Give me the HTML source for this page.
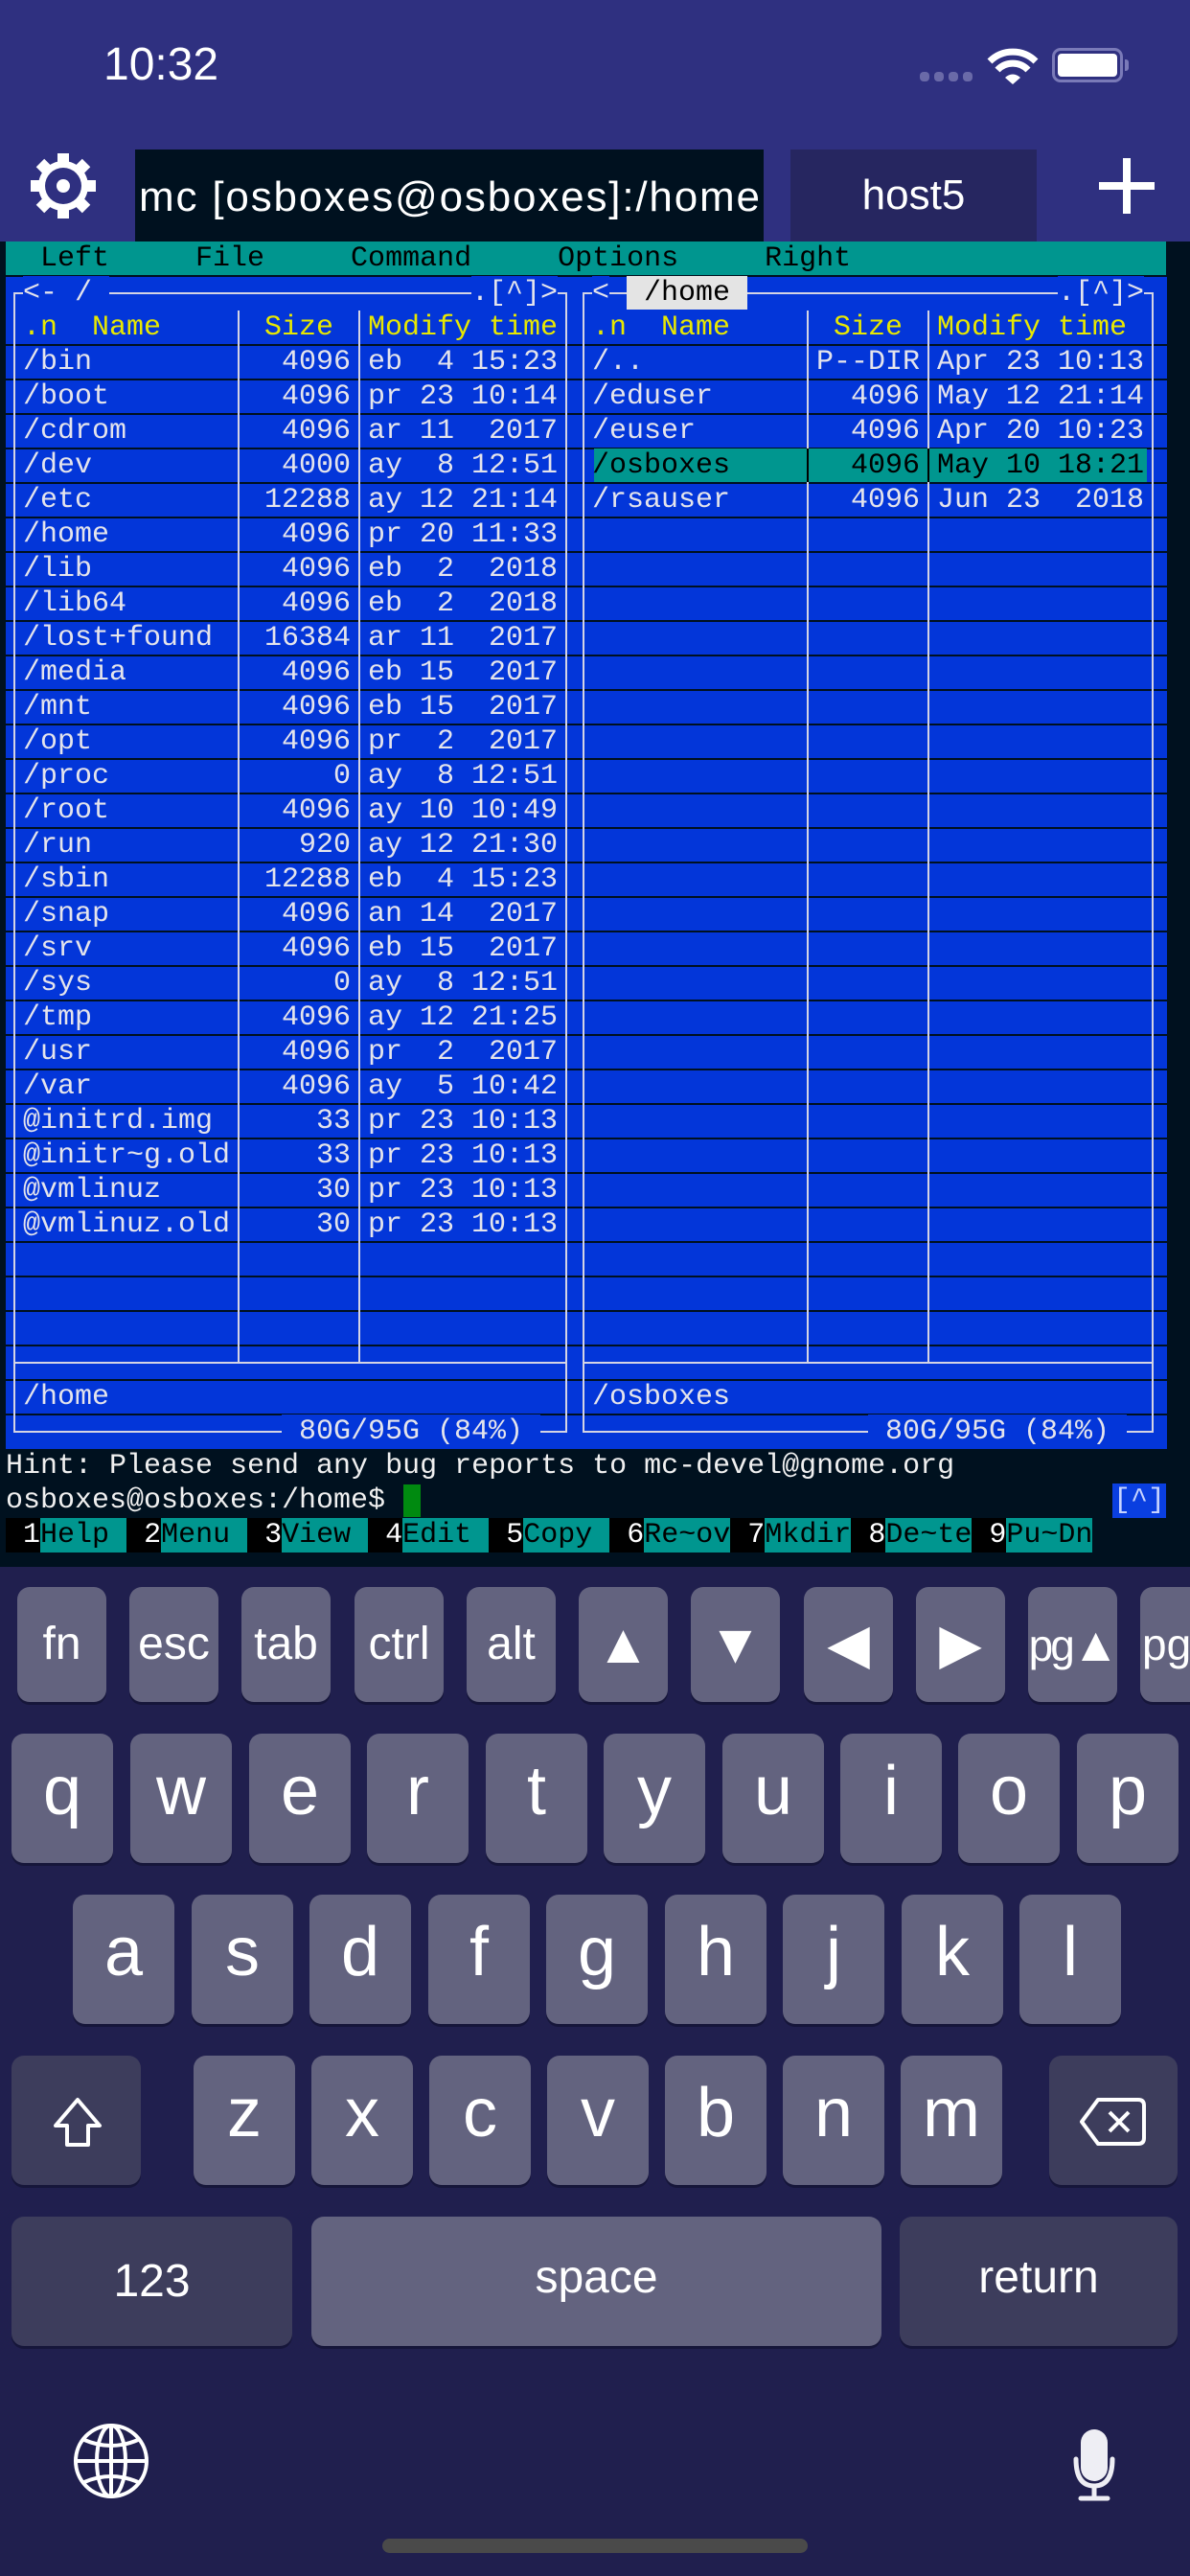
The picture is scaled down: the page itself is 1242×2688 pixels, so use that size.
<!DOCTYPE html>
<html><head><meta charset="utf-8">
<style>
*{margin:0;padding:0;box-sizing:border-box}
body{width:1242px;height:2688px;background:#201f4e;position:relative;overflow:hidden;font-family:"Liberation Sans",sans-serif}
.a{position:absolute}
.t{position:absolute;font-family:"Liberation Mono",monospace;font-size:30px;line-height:36px;white-space:pre;color:#e4e4ec}
.y{color:#e8e800}
.k{color:#000}
.s{text-align:right}
.vl{position:absolute;width:2px;background:#d4d4e4}
.hl{position:absolute;height:2px;background:#d4d4e4}
.bb{background:#0336d9}
.rl{position:absolute;left:6px;width:1212px;height:2px;background:#001120}
.key{position:absolute;background:#63637f;border-radius:13px;box-shadow:0 3px 0 #16163a;color:#fff;text-align:center}
.dk{background:#3d3d5c}
.acc{top:1656px;width:93px;height:120px;font-size:48px;line-height:120px}
.ar{font-size:58px}
.lt{font-size:72px;width:106px;height:135px;line-height:120px}
</style></head><body>
<div class="a" style="left:0;top:0;width:1242px;height:252px;background:#2f3080"></div>
<div class="a" style="left:108px;top:40px;font-size:48px;color:#fff;line-height:56px">10:32</div>
<div class="a" style="left:960px;top:75px;width:10px;height:10px;border-radius:4px;background:#6a6aa8"></div>
<div class="a" style="left:975px;top:75px;width:10px;height:10px;border-radius:4px;background:#6a6aa8"></div>
<div class="a" style="left:990px;top:75px;width:10px;height:10px;border-radius:4px;background:#6a6aa8"></div>
<div class="a" style="left:1005px;top:75px;width:10px;height:10px;border-radius:4px;background:#6a6aa8"></div>
<svg class="a" style="left:1030px;top:48px" width="54" height="40" viewBox="0 0 54 40">
<path d="M3 16 A34 34 0 0 1 51 16" stroke="#fff" stroke-width="7" fill="none"/>
<path d="M11 25 A22 22 0 0 1 43 25" stroke="#fff" stroke-width="7" fill="none"/>
<path d="M19 33 L27 40 L35 33 A11 11 0 0 0 19 33Z" fill="#fff"/></svg>
<div class="a" style="left:1098px;top:50px;width:74px;height:36px;border:3px solid #7a7ab8;border-radius:9px"></div>
<div class="a" style="left:1104px;top:56px;width:62px;height:24px;background:#fff;border-radius:4px"></div>
<div class="a" style="left:1174px;top:62px;width:4px;height:12px;background:#7a7ab8;border-radius:0 3px 3px 0"></div>
<svg class="a" style="left:30px;top:158px" width="72" height="72" viewBox="-36 -36 72 72">
<g fill="#fff"><rect x="-6" y="-34" width="12" height="14"/><rect x="-6" y="-34" width="12" height="14" transform="rotate(45)"/><rect x="-6" y="-34" width="12" height="14" transform="rotate(90)"/><rect x="-6" y="-34" width="12" height="14" transform="rotate(135)"/><rect x="-6" y="-34" width="12" height="14" transform="rotate(180)"/><rect x="-6" y="-34" width="12" height="14" transform="rotate(225)"/><rect x="-6" y="-34" width="12" height="14" transform="rotate(270)"/><rect x="-6" y="-34" width="12" height="14" transform="rotate(315)"/>
<circle r="26"/></g><circle r="19" fill="#2f3080"/><circle r="7" fill="#fff"/></svg>
<div class="a" style="left:141px;top:156px;width:656px;height:96px;background:#00111f"></div>
<svg class="a" style="left:141px;top:156px" width="656" height="96"><text x="4" y="64" font-family="Liberation Sans" font-size="44" fill="#fff" textLength="648">mc [osboxes@osboxes]:/home</text></svg>
<div class="a" style="left:825px;top:156px;width:257px;height:96px;background:#262660;color:#fff;font-size:44px;line-height:96px;text-align:center">host5</div>
<div class="a" style="left:1147px;top:190px;width:58px;height:8px;background:#fff"></div>
<div class="a" style="left:1172px;top:165px;width:8px;height:58px;background:#fff"></div>

<div class="a" style="left:0;top:252px;width:1242px;height:1383px;background:#00111f"></div>
<div class="a" style="left:6px;top:252px;width:1211px;height:36px;background:#00968f"></div>
<div class="a" style="left:6px;top:288px;width:1212px;height:1224px;background:#0336d9"></div>
<div class="t k" style="left:6px;top:252px">  Left     File     Command     Options     Right</div>
<div class="rl" style="top:287px"></div>
<div class="rl" style="top:359px"></div><div class="rl" style="top:395px"></div><div class="rl" style="top:431px"></div><div class="rl" style="top:467px"></div><div class="rl" style="top:503px"></div><div class="rl" style="top:539px"></div><div class="rl" style="top:575px"></div><div class="rl" style="top:611px"></div><div class="rl" style="top:647px"></div><div class="rl" style="top:683px"></div><div class="rl" style="top:719px"></div><div class="rl" style="top:755px"></div><div class="rl" style="top:791px"></div><div class="rl" style="top:827px"></div><div class="rl" style="top:863px"></div><div class="rl" style="top:899px"></div><div class="rl" style="top:935px"></div><div class="rl" style="top:971px"></div><div class="rl" style="top:1007px"></div><div class="rl" style="top:1043px"></div><div class="rl" style="top:1079px"></div><div class="rl" style="top:1115px"></div><div class="rl" style="top:1151px"></div><div class="rl" style="top:1187px"></div><div class="rl" style="top:1223px"></div><div class="rl" style="top:1259px"></div><div class="rl" style="top:1295px"></div><div class="rl" style="top:1331px"></div><div class="rl" style="top:1367px"></div><div class="rl" style="top:1403px"></div><div class="rl" style="top:1439px"></div><div class="rl" style="top:1475px"></div>

<div class="a" style="left:620px;top:468px;width:577px;height:35px;background:#00968f"></div>

<div class="vl" style="left:14px;top:306px;height:1189px"></div>
<div class="vl" style="left:590px;top:306px;height:1189px"></div>
<div class="vl" style="left:608px;top:306px;height:1189px"></div>
<div class="vl" style="left:1202px;top:306px;height:1189px"></div>
<div class="vl" style="left:248px;top:324px;height:1098px"></div>
<div class="vl" style="left:374px;top:324px;height:1098px"></div>
<div class="vl" style="left:842px;top:324px;height:1098px"></div>
<div class="vl" style="left:968px;top:324px;height:1098px"></div>
<div class="a" style="left:842px;top:468px;width:2px;height:35px;background:#000"></div>
<div class="a" style="left:968px;top:468px;width:2px;height:35px;background:#000"></div>
<div class="hl" style="left:14px;top:305px;width:578px"></div>
<div class="hl" style="left:608px;top:305px;width:596px"></div>
<div class="hl" style="left:14px;top:1421px;width:578px"></div>
<div class="hl" style="left:608px;top:1421px;width:596px"></div>
<div class="hl" style="left:14px;top:1493px;width:578px"></div>
<div class="hl" style="left:608px;top:1493px;width:596px"></div>

<div class="t bb" style="left:24px;top:288px">&lt;- / </div>
<div class="t bb" style="left:492px;top:288px">.[^]&gt;</div>
<div class="t bb" style="left:618px;top:288px">&lt;</div>
<div class="t k" style="left:654px;top:288px;background:#e4e4e4;height:35px"> /home </div>
<div class="t bb" style="left:1104px;top:288px">.[^]&gt;</div>
<div class="t bb" style="left:294px;top:1476px"> 80G/95G (84%) </div>
<div class="t bb" style="left:906px;top:1476px"> 80G/95G (84%) </div>

<div class="t y" style="left:24px;top:324px">.n  Name</div>
<div class="t y" style="left:276px;top:324px">Size</div>
<div class="t y" style="left:384px;top:324px">Modify time</div>
<div class="t y" style="left:618px;top:324px">.n  Name</div>
<div class="t y" style="left:870px;top:324px">Size</div>
<div class="t y" style="left:978px;top:324px">Modify time</div>

<div class="t" style="left:24px;top:360px">/bin
/boot
/cdrom
/dev
/etc
/home
/lib
/lib64
/lost+found
/media
/mnt
/opt
/proc
/root
/run
/sbin
/snap
/srv
/sys
/tmp
/usr
/var
@initrd.img
@initr~g.old
@vmlinuz
@vmlinuz.old</div>
<div class="t s" style="left:258px;width:108px;top:360px">4096
4096
4096
4000
12288
4096
4096
4096
16384
4096
4096
4096
0
4096
920
12288
4096
4096
0
4096
4096
4096
33
33
30
30</div>
<div class="t" style="left:384px;top:360px">eb  4 15:23
pr 23 10:14
ar 11  2017
ay  8 12:51
ay 12 21:14
pr 20 11:33
eb  2  2018
eb  2  2018
ar 11  2017
eb 15  2017
eb 15  2017
pr  2  2017
ay  8 12:51
ay 10 10:49
ay 12 21:30
eb  4 15:23
an 14  2017
eb 15  2017
ay  8 12:51
ay 12 21:25
pr  2  2017
ay  5 10:42
pr 23 10:13
pr 23 10:13
pr 23 10:13
pr 23 10:13</div>

<div class="t" style="left:618px;top:360px">/..
/eduser
/euser
<span class="k">/osboxes</span>
/rsauser</div>
<div class="t s" style="left:852px;width:108px;top:360px">P--DIR
4096
4096
<span class="k">4096</span>
4096</div>
<div class="t" style="left:978px;top:360px">Apr 23 10:13
May 12 21:14
Apr 20 10:23
<span class="k">May 10 18:21</span>
Jun 23  2018</div>

<div class="t" style="left:24px;top:1440px">/home</div>
<div class="t" style="left:618px;top:1440px">/osboxes</div>

<div class="t" style="left:6px;top:1512px;color:#f0f0f0">Hint: Please send any bug reports to mc-devel@gnome.org</div>
<div class="t" style="left:6px;top:1548px;color:#f0f0f0">osboxes@osboxes:/home$</div>
<div class="a" style="left:421px;top:1549px;width:18px;height:34px;background:#008a10"></div>
<div class="t" style="left:1161px;top:1548px;width:56px;height:36px;background:#0a3fe0;color:#c8d4ff;text-align:center">[^]</div>

<div class="a" style="left:6px;top:1584px;width:1134px;height:36px;background:#000"></div>
<div class="a" style="left:42px;top:1584px;width:90px;height:36px;background:#00968f"></div>
<div class="a" style="left:168px;top:1584px;width:90px;height:36px;background:#00968f"></div>
<div class="a" style="left:294px;top:1584px;width:90px;height:36px;background:#00968f"></div>
<div class="a" style="left:420px;top:1584px;width:90px;height:36px;background:#00968f"></div>
<div class="a" style="left:546px;top:1584px;width:90px;height:36px;background:#00968f"></div>
<div class="a" style="left:672px;top:1584px;width:90px;height:36px;background:#00968f"></div>
<div class="a" style="left:798px;top:1584px;width:90px;height:36px;background:#00968f"></div>
<div class="a" style="left:924px;top:1584px;width:90px;height:36px;background:#00968f"></div>
<div class="a" style="left:1050px;top:1584px;width:90px;height:36px;background:#00968f"></div>
<div class="t" style="left:6px;top:1584px;color:#fff"> <span>1</span><span class="k">Help </span> <span>2</span><span class="k">Menu </span> <span>3</span><span class="k">View </span> <span>4</span><span class="k">Edit </span> <span>5</span><span class="k">Copy </span> <span>6</span><span class="k">Re~ov</span> <span>7</span><span class="k">Mkdir</span> <span>8</span><span class="k">De~te</span> <span>9</span><span class="k">Pu~Dn</span></div>

<div class="key acc" style="left:18px">fn</div>
<div class="key acc" style="left:135px">esc</div>
<div class="key acc" style="left:252px">tab</div>
<div class="key acc" style="left:370px">ctrl</div>
<div class="key acc" style="left:487px">alt</div>
<div class="key acc ar" style="left:604px">▲</div>
<div class="key acc ar" style="left:721px">▼</div>
<div class="key acc ar" style="left:839px">◀</div>
<div class="key acc ar" style="left:956px">▶</div>
<div class="key acc" style="left:1073px;font-size:46px;letter-spacing:-3px">pg<span style="font-size:50px">▲</span></div>
<div class="key acc" style="left:1190px;text-align:left;padding-left:2px;font-size:46px">pg</div>

<div class="key lt" style="left:12px;top:1809px">q</div>
<div class="key lt" style="left:136px;top:1809px">w</div>
<div class="key lt" style="left:260px;top:1809px">e</div>
<div class="key lt" style="left:383px;top:1809px">r</div>
<div class="key lt" style="left:507px;top:1809px">t</div>
<div class="key lt" style="left:630px;top:1809px">y</div>
<div class="key lt" style="left:754px;top:1809px">u</div>
<div class="key lt" style="left:877px;top:1809px">i</div>
<div class="key lt" style="left:1000px;top:1809px">o</div>
<div class="key lt" style="left:1124px;top:1809px">p</div>
<div class="key lt" style="left:76px;top:1977px">a</div>
<div class="key lt" style="left:200px;top:1977px">s</div>
<div class="key lt" style="left:323px;top:1977px">d</div>
<div class="key lt" style="left:447px;top:1977px">f</div>
<div class="key lt" style="left:570px;top:1977px">g</div>
<div class="key lt" style="left:694px;top:1977px">h</div>
<div class="key lt" style="left:817px;top:1977px">j</div>
<div class="key lt" style="left:941px;top:1977px">k</div>
<div class="key lt" style="left:1064px;top:1977px">l</div>
<div class="key dk" style="left:12px;top:2145px;width:135px;height:135px"></div>
<svg class="a" style="left:52px;top:2188px" width="58" height="54" viewBox="0 0 58 54"><path d="M29 3 L52 30 L40 30 L40 50 L18 50 L18 30 L6 30 Z" fill="none" stroke="#fff" stroke-width="4" stroke-linejoin="round"/></svg>
<div class="key lt" style="left:202px;top:2145px">z</div>
<div class="key lt" style="left:325px;top:2145px">x</div>
<div class="key lt" style="left:448px;top:2145px">c</div>
<div class="key lt" style="left:571px;top:2145px">v</div>
<div class="key lt" style="left:694px;top:2145px">b</div>
<div class="key lt" style="left:817px;top:2145px">n</div>
<div class="key lt" style="left:940px;top:2145px">m</div>
<div class="key dk" style="left:1095px;top:2145px;width:134px;height:135px"></div>
<svg class="a" style="left:1126px;top:2188px" width="72" height="52" viewBox="0 0 72 52"><path d="M20 3 L62 3 Q68 3 68 9 L68 43 Q68 49 62 49 L20 49 L3 26 Z" fill="none" stroke="#fff" stroke-width="4" stroke-linejoin="round"/><path d="M32 16 L52 36 M52 16 L32 36" stroke="#fff" stroke-width="4"/></svg>
<div class="key dk" style="left:12px;top:2313px;width:293px;height:135px;font-size:48px;line-height:135px">123</div>
<div class="key" style="left:325px;top:2313px;width:595px;height:135px;font-size:48px;line-height:128px">space</div>
<div class="key dk" style="left:939px;top:2313px;width:290px;height:135px;font-size:48px;line-height:128px">return</div>

<svg class="a" style="left:76px;top:2528px" width="80" height="80" viewBox="0 0 80 80"><g fill="none" stroke="#fff" stroke-width="4"><ellipse cx="40" cy="40" rx="37" ry="37"/><ellipse cx="40" cy="40" rx="15" ry="37"/><line x1="40" y1="3" x2="40" y2="77"/><line x1="3" y1="40" x2="77" y2="40"/><path d="M12 18 Q40 30 68 18"/><path d="M12 62 Q40 50 68 62"/></g></svg>
<svg class="a" style="left:1118px;top:2532px" width="48" height="80" viewBox="0 0 48 80"><rect x="10" y="3" width="28" height="54" rx="14" fill="#eeeef4"/><path d="M5 34 Q5 62 24 62 Q43 62 43 34" fill="none" stroke="#eeeef4" stroke-width="5" stroke-linecap="round"/><line x1="24" y1="62" x2="24" y2="74" stroke="#eeeef4" stroke-width="5"/><line x1="10" y1="75" x2="38" y2="75" stroke="#eeeef4" stroke-width="5" stroke-linecap="round"/></svg>
<div class="a" style="left:399px;top:2649px;width:444px;height:15px;border-radius:8px;background:#4a4a4a"></div>
</body></html>
